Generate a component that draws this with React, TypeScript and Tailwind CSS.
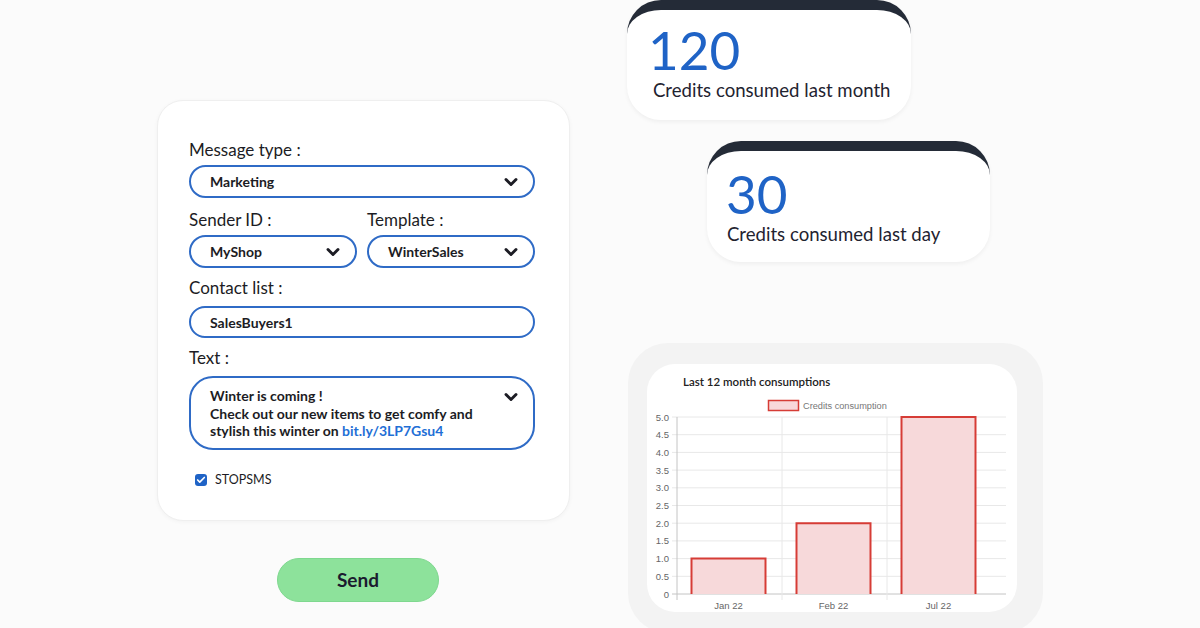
import React from "react";
import { ChevronDown, Check } from "lucide-react";

const font = { fontFamily: "Lato, 'Noto Sans', sans-serif" };

const Chevron = () => (
  <ChevronDown size={20} strokeWidth={3.5} className="text-[#1c1c24]" />
);

const Select = ({ value, className = "" }: { value: string; className?: string }) => (
  <div
    className={`flex items-center justify-between h-[33px] rounded-full border-2 border-[#2f6bc6] bg-white pl-[19px] pr-[12px] ${className}`}
  >
    <span className="text-[14px] font-bold text-[#1c1c24]">{value}</span>
    <Chevron />
  </div>
);

const Label = ({ children, className = "" }: { children: React.ReactNode; className?: string }) => (
  <p className={`text-[17px] leading-[26px] text-[#1c1c24] ${className}`}>{children}</p>
);

const StatCard = ({
  value,
  label,
  className = "",
  labelClass = "",
}: {
  value: string;
  label: string;
  className?: string;
  labelClass?: string;
}) => (
  <div
    className={`shrink-0 bg-white border-t-[10px] border-[#242b37] rounded-[34px] shadow-[0_2px_4px_rgba(0,0,0,0.05)] ${className}`}
  >
    <p className="text-[53px] leading-none text-[#1f63c6]">{value}</p>
    <p className={`mt-[3px] text-[18.6px] leading-[22px] text-[#1f2330] ${labelClass}`}>{label}</p>
  </div>
);

const yTicks = ["0", "0.5", "1.0", "1.5", "2.0", "2.5", "3.0", "3.5", "4.0", "4.5", "5.0"];
const bars = [
  { label: "Jan 22", value: 1, x: 691.5 },
  { label: "Feb 22", value: 2, x: 796.5 },
  { label: "Jul 22", value: 5, x: 901.5 },
];
const step = 17.7;
const base = 594;

const Chart = () => (
  <svg
    width={370}
    height={248}
    viewBox="647 364 370 248"
    style={{ fontFamily: "'Liberation Sans', Arial, sans-serif" }}
  >
    <text x={683} y={386} fontSize={11.5} fontWeight={600} fill="#222" style={font}>
      Last 12 month consumptions
    </text>
    <rect x={768.5} y={400.5} width={30} height={10} fill="#f8d8da" stroke="#d63c36" strokeWidth={1.5} />
    <text x={803} y={409} fontSize={9.2} fill="#777">
      Credits consumption
    </text>

    {yTicks.map((t, i) => {
      const y = base - i * step;
      return (
        <g key={t}>
          <line x1={672} x2={1006} y1={y} y2={y} stroke={i === 0 ? "#c4c4c4" : "#e8e8e8"} strokeWidth={1} />
          <text x={669} y={y + 3.5} fontSize={9.5} fill="#666" textAnchor="end">
            {t}
          </text>
        </g>
      );
    })}
    <line x1={677} x2={677} y1={417} y2={600} stroke="#c4c4c4" />
    <line x1={782} x2={782} y1={417} y2={600} stroke="#e8e8e8" />
    <line x1={887} x2={887} y1={417} y2={600} stroke="#e8e8e8" />

    {bars.map((b) => {
      const top = base - b.value * 2 * step;
      return (
        <g key={b.label}>
          <rect x={b.x} y={top} width={74} height={base - top} fill="#f7d9da" />
          <polyline
            points={`${b.x},${base} ${b.x},${top} ${b.x + 74},${top} ${b.x + 74},${base}`}
            fill="none"
            stroke="#d63c36"
            strokeWidth={2}
          />
          <text x={b.x + 37} y={609} fontSize={9.5} fill="#666" textAnchor="middle">
            {b.label}
          </text>
        </g>
      );
    })}
  </svg>
);

export default function App() {
  return (
    <div className="w-[1200px] h-[628px] overflow-hidden bg-[#fbfbfb] flex" style={font}>
      {/* left: form */}
      <div className="ml-[157px] pt-[100px] w-[413px] shrink-0 flex flex-col">
        <div className="shrink-0 h-[421px] bg-white rounded-[26px] border border-[#efefef] shadow-[0_1px_4px_rgba(0,0,0,0.04)] pt-[36px] pl-[31px] pr-[34px]">
          <Label>Message type :</Label>
          <Select value="Marketing" className="mt-[2px]" />

          <div className="grid grid-cols-2 gap-x-[10px] mt-[9px]">
            <Label>Sender ID :</Label>
            <Label>Template :</Label>
            <Select value="MyShop" className="mt-[2px] h-[32px]" />
            <Select value="WinterSales" className="mt-[2px] h-[32px]" />
          </div>

          <Label className="mt-[7px]">Contact list :</Label>
          <div className="mt-[5px] h-[32px] rounded-full border-2 border-[#2f6bc6] pl-[19px] flex items-center">
            <span className="text-[14px] font-bold text-[#1c1c24]">SalesBuyers1</span>
          </div>

          <Label className="mt-[7px]">Text :</Label>
          <div className="mt-[5px] h-[74px] rounded-[24px] border-2 border-[#2f6bc6] pl-[19px] pr-[12px] pt-[9px] flex justify-between">
            <p className="text-[14px] leading-[17.5px] font-bold text-[#1c1c24]">
              Winter is coming !
              <br />
              Check out our new items to get comfy and
              <br />
              stylish this winter on <span className="text-[#1f6fd6]">bit.ly/3LP7Gsu4</span>
            </p>
            <Chevron />
          </div>

          <div className="mt-[21px] ml-[6px] flex items-center gap-[8px]">
            <span className="w-[12px] h-[12px] rounded-[3px] bg-[#1f63c6] flex items-center justify-center">
              <Check size={10} strokeWidth={4} className="text-white" />
            </span>
            <span className="text-[12.5px] text-[#1c1c24]">STOPSMS</span>
          </div>
        </div>

        <button className="shrink-0 mt-[37px] ml-[120px] w-[162px] h-[44px] rounded-full bg-[#8de29b] border border-[#7fd88f] text-[19px] font-bold text-[#1b1b2f]">
          Send
        </button>
      </div>

      {/* right: stats + chart */}
      <div className="ml-[57px] shrink-0 flex flex-col">
        <StatCard
          value="120"
          label="Credits consumed last month"
          className="w-[284px] h-[120px] pt-[13px] pl-[21px]"
          labelClass="ml-[5px]"
        />
        <StatCard
          value="30"
          label="Credits consumed last day"
          className="ml-[80px] mt-[21px] w-[283px] h-[121px] pt-[16px] pl-[19px]"
          labelClass="ml-[1px]"
        />
        <div className="shrink-0 mt-[81px] ml-[1px] w-[415px] h-[290px] bg-[#f3f3f3] rounded-[40px] pt-[21px] pl-[19px]">
          <div className="w-[370px] h-[248px] bg-white rounded-[28px] overflow-hidden">
            <Chart />
          </div>
        </div>
      </div>
    </div>
  );
}
